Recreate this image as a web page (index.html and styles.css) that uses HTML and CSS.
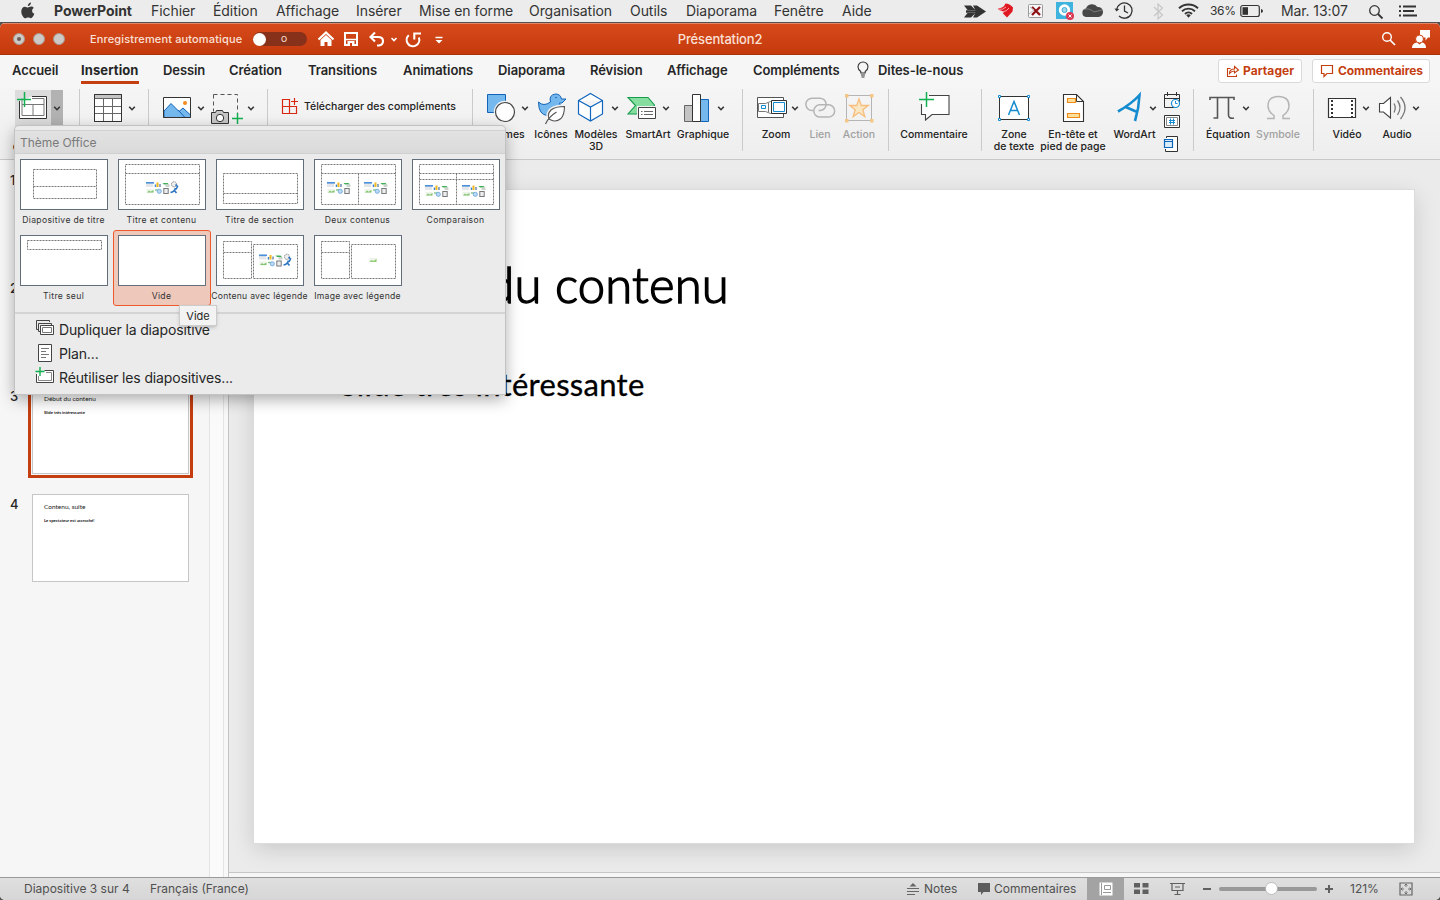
FILE: index.html
```html
<!DOCTYPE html>
<html lang="fr">
<head>
<meta charset="utf-8">
<title>Présentation2</title>
<link rel="stylesheet" href="styles.css">
</head>
<body>
<svg class="defs" width="0" height="0">
  <defs>
    <symbol id="mini6" viewBox="0 0 24 12" overflow="visible">
      <rect x="0" y="0" width="7" height="5" fill="#e4e6ea"/><rect x="0" y="0" width="8" height="1.6" fill="#4a90dc"/>
      <path d="M9.5 5V2.500" stroke="#3d84d6" stroke-width="1.500"/><path d="M11.500 5V0.500" stroke="#f3b81f" stroke-width="2"/><path d="M14 5V2" stroke="#6c8db5" stroke-width="1.500"/>
      <path d="M16.500 1h5l1.500 1.500h-5z" fill="#3faf55"/><rect x="19.500" y="2.500" width="4" height="2.500" fill="#cfd3cf"/>
      <rect x="0.500" y="7" width="7" height="4" fill="#edf3e8"/><path d="M1 10.500l2-2 1.500 1.200 3-1.700v2.500z" fill="#7fc66d"/>
      <path d="M9 8h4" stroke="#77bf82" stroke-width="1.300"/><circle cx="13.300" cy="9.300" r="2.100" fill="#b9d8f3" stroke="#68a4dc" stroke-width=".8"/>
      <rect x="17.800" y="6.500" width="4.400" height="5" fill="#eee" stroke="#77797d" stroke-width="1"/>
    </symbol>
    <symbol id="mini8" viewBox="0 0 32 12" overflow="visible">
      <use href="#mini6" width="24" height="12"/>
      <circle cx="28" cy="2.300" r="2.600" fill="#eee" stroke="#777" stroke-width=".8" stroke-dasharray="1.500 .6"/><path d="M24.500 10.500q4-.5 5-4.500M29.500 2.500l2 2-1.500 3M28 8l2.500 3" fill="none" stroke="#2e75c4" stroke-width="1.600"/>
    </symbol>
    <symbol id="caret" viewBox="0 0 6 4" overflow="visible"><path d="M.2.3L3 3.200 5.800.3" fill="none" stroke="#333" stroke-width="1.600"/></symbol>
  </defs>
</svg>

<header class="menubar">
  <svg class="apple" width="16" height="18" viewBox="0 0 16 18"><path fill="#3a3a3a" d="M11 .5c.1 1.800-1.500 3.600-3.200 3.500C7.600 2.300 9.300.6 11 .5zM13.700 6c-1 .6-1.600 1.500-1.600 2.800 0 1.500.9 2.500 2.200 3-.5 1.700-1.900 4.400-3.500 4.400-1 0-1.400-.6-2.600-.6s-1.700.6-2.600.6C3.500 16.200 1.300 12.600 1.300 9.400 1.300 6.500 3 4.700 5 4.700c1.200 0 2.200.8 2.900.8.700 0 1.900-.9 3.300-.9 1 0 2 .5 2.500 1.400z"/></svg>
  <nav class="menus"><b>PowerPoint</b><span>Fichier</span><span>Édition</span><span>Affichage</span><span>Insérer</span><span>Mise en forme</span><span>Organisation</span><span>Outils</span><span>Diaporama</span><span>Fenêtre</span><span>Aide</span></nav>
  <svg class="tray" width="246" height="22" viewBox="960 0 246 22">
    <path fill="#333" d="M964 5.500h7l4.500 4.500h-8zM964 17.500h7l4.500-4.500h-8zM973 5.500h4l9 6-9 6h-4l2.500-4.700H966v-2.600h9.500z"/>
    <path fill="#e01822" d="M998 8q5 1 7.500-4.500 4 0 7.500 4l-.5 4-5.500 6-4-4 1-2-5-1.500z"/><path d="M998 9q5 1.500 8-2M1002 12q5-.5 7-4" stroke="#f9a3a6" fill="none"/>
    <rect x="1028.500" y="4.500" width="14" height="13" rx="1" fill="#f7f7f7" stroke="#9a9a9a"/><path d="M1032 7l8 8M1040 7l-8 8" stroke="#8e1118" stroke-width="2.300"/><path d="M1029 14l5-4-4-3" stroke="#bbb" fill="none"/>
    <rect x="1056" y="2" width="17" height="17" fill="#3db3dd"/><circle cx="1064.500" cy="10" r="5.700" fill="#fff"/><circle cx="1064.500" cy="10" r="2.500" fill="#9bd9ee" stroke="#3daad5"/><circle cx="1070" cy="16" r="4" fill="#dc3753"/><path d="M1068.500 14.500l3 3m0-3l-3 3" stroke="#fff"/>
    <path fill="#474747" d="M1086 17a4.300 4.300 0 0 1 0-8.500 6.500 6.500 0 0 1 11.500-1.500 5 5 0 0 1 1 10z"/><path d="M1084 9.500q5-2 10 2.500l8-2" stroke="#888" fill="none" stroke-width=".8"/>
    <path d="M1116.800 9.500A7.700 7.700 0 1 1 1119 16" fill="none" stroke="#333" stroke-width="1.300"/><path d="M1114.500 8.500l2 3 2.800-2.500z" fill="#333"/><path d="M1124.500 5.500v5.500l3.500 2" stroke="#333" fill="none" stroke-width="1.300"/>
    <path d="M1154 7l8.500 8-4.500 4V4l4.500 4-8.500 8" fill="none" stroke="#c6c6c6" stroke-width="1.200"/>
    <g fill="none" stroke="#333" stroke-width="1.900"><path d="M1179 8.200a14 14 0 0 1 19 0M1182 11.200a9.500 9.500 0 0 1 13 0M1185 14a5 5 0 0 1 7 0"/></g><path d="M1186.300 15.300a3.200 3.200 0 0 1 4.400 0l-2.200 2.400z" fill="#333"/>
  </svg>
  <span class="pct">36%</span>
  <svg width="24" height="14" viewBox="0 0 24 14"><rect x=".8" y="1.500" width="18.500" height="11" rx="2" fill="none" stroke="#333" stroke-width="1.200"/><rect x="2.500" y="3.200" width="5.500" height="7.600" fill="#333"/><path d="M21 5v4q2-.5 2-2t-2-2z" fill="#333"/></svg>
  <span class="clock">Mar. 13:07</span>
  <svg class="find" width="16" height="16" viewBox="0 0 16 16" fill="none" stroke="#333"><circle cx="6.500" cy="6.500" r="4.800" stroke-width="1.300"/><path d="M10 10l4.500 4.500" stroke-width="1.800"/></svg>
  <svg class="list" width="18" height="12" viewBox="0 0 18 12"><path d="M0 1.500h2M4 1.500h13M0 6h2M4 6h11M0 10.500h2M4 10.500h14" stroke="#333" stroke-width="1.800"/></svg>
</header>

<div class="window">
  <div class="titlebar">
    <div class="lights"><i class="dot"></i><i></i><i></i></div>
    <span class="autosave">Enregistrement automatique</span>
    <span class="switch"><i></i><em>O</em></span>
    <svg class="quick" width="136" height="22" viewBox="312 28 136 22" fill="none" stroke="#fff">
      <path d="M318.500 39.500l7.500-7 7.500 7" stroke-width="2.200"/><path d="M320.500 40l5.500-5 5.500 5v6h-4v-4h-3v4h-4z" fill="#fff" stroke="none"/>
      <path d="M345 33h12v12h-12z" stroke-width="2"/><path d="M346 39.500h10" stroke-width="1.500"/><path d="M347.500 41h7v5h-7z" fill="#fff" stroke="none"/><path d="M350 43h2v3h-2z" fill="#c93f12" stroke="none"/>
      <path d="M375 32.500l-4.500 4.500 4.500 4.500M371 37h7q5 0 5 4 0 4-4 4.500h-2" stroke-width="2.100"/>
      <path d="M391.500 38l2.500 2.500 2.500-2.500" stroke-width="1.600"/>
      <path d="M408.800 35.200a6.300 6.300 0 1 0 10 2.300M414.300 39.500v-6h6.700" stroke-width="2.100"/>
      <path d="M435.500 37.500h7" stroke-width="1.300"/><path d="M435.500 40h7l-3.500 3.500z" fill="#fff" stroke="none"/>
    </svg>
    <span class="doc">Présentation2</span>
    <svg class="who" width="56" height="22" viewBox="1378 28 56 22"><circle cx="1387" cy="37" r="4.300" fill="none" stroke="#fff" stroke-width="1.400"/><path d="M1390 40l5 5" stroke="#fff" stroke-width="1.700"/><path d="M1420 30h10v7.500h-2l-2.500 3v-3h-5.500z" fill="#fff"/><circle cx="1419.500" cy="39" r="4" fill="#fff" stroke="#cb4114" stroke-width="1"/><path d="M1412 48q0-5 5-5.500l2.500 2 2.500-2q4 .5 4 5.500z" fill="#fff"/></svg>
  </div>

  <nav class="tabs">
    <span>Accueil</span><span class="on">Insertion</span><span>Dessin</span><span>Création</span><span>Transitions</span><span>Animations</span><span>Diaporama</span><span>Révision</span><span>Affichage</span><span>Compléments</span>
    <svg class="bulb" width="14" height="18" viewBox="0 0 14 18" fill="none" stroke="#333" stroke-width="1.100"><path d="M4.800 12V10.500Q2 8.500 2 6a5 5 0 0 1 10 0q0 2.500-2.800 4.500V12z"/><path d="M5 14h4M5.500 16h3"/></svg>
    <span>Dites-le-nous</span>
    <span class="pill share"><svg width="14" height="14" viewBox="0 0 14 14" fill="none" stroke="#c43e10" stroke-width="1.100"><path d="M4.500 4.500H1.500v8h9V10.500"/><path d="M3.500 9.500q0-4.500 5-4.500V2.500L12.500 6 8.500 9V7q-3 0-5 2.500z"/></svg>Partager</span>
    <span class="pill com"><svg width="14" height="14" viewBox="0 0 14 14" fill="none" stroke="#c43e10" stroke-width="1.200"><path d="M1.500 1.500h11v8H7l-3 3v-3H1.500z"/></svg>Commentaires</span>
  </nav>

  <div class="ribbon">
    <section class="g g1"><div class="btn split"><svg width="50" height="38" viewBox="15 89 50 38"><path d="M15 90h36v37H15z" fill="#dcdcdc"/><path d="M51 90h12v37H51z" fill="#b2b2b2"/><path d="M32 96.500h14.500v22h-27V101" fill="#fff" stroke="#333"/><path d="M22 104.500h22v11H22zM33 104.500v11M22 98.500v6M32 98.500h12v6" fill="none" stroke="#777"/><path d="M17 99.500h14M24.500 92v15" stroke="#12b050" stroke-width="1.500"/><use href="#caret" x="54" y="106.500" width="6" height="4"/></svg><label>Nouvelle<br>diapositive</label></div></section>
    <section class="g g2"><div class="btn"><svg width="52" height="38" viewBox="88 89 52 38"><path d="M94.500 94.500h27v27h-27z" fill="#fff" stroke="#333"/><path d="M95 95h26v3.500H95z" fill="#c4c4c4"/><path d="M94.500 98.500h27M94.500 106.500h27M94.500 113.500h27M103.500 98.500v23M112.500 98.500v23" stroke="#666"/><path d="M94.500 94.500h27v27h-27z" fill="none" stroke="#333"/><use href="#caret" x="129" y="106.500" width="6" height="4"/></svg><label>Tableau</label></div></section>
    <section class="g g3">
      <div class="btn"><svg width="48" height="38" viewBox="160 89 48 38"><path d="M163.500 97.500h27v20h-27z" fill="#fff"/><path d="M164 111l7-7.500 8 8 4-3.500 7.500 7v2.500H164z" fill="#75b8ee" stroke="#1264b8"/><path d="M178 110l7 7.500" stroke="#1264b8"/><circle cx="185" cy="103" r="2" fill="#f58a1f"/><path d="M163.500 97.500h27v20h-27z" fill="none" stroke="#333"/><use href="#caret" x="198" y="106.500" width="6" height="4"/></svg><label>Images</label></div>
      <div class="btn"><svg width="48" height="38" viewBox="208 89 48 38"><path d="M213.500 94.500h24v23" fill="none" stroke="#555" stroke-dasharray="4 3"/><path d="M213.500 94.500v17" stroke="#555" stroke-dasharray="4 3"/><path d="M211.500 112.500h4l1-2h6l1 2h5v11h-17z" fill="#c6c6c6" stroke="#333"/><circle cx="220" cy="118" r="3.700" fill="#fff" stroke="#333"/><path d="M232 118.500h11M237.500 113v11" stroke="#12b050" stroke-width="1.500"/><use href="#caret" x="248" y="106.500" width="6" height="4"/></svg><label>Capture</label></div>
    </section>
    <section class="g g4"><svg width="18" height="18" viewBox="281 97 18 18" fill="none" stroke="#d8280f" stroke-width="1.200"><path d="M282.500 99.500h7v7h-7zM282.500 106.500h7v7h-7zM289.500 106.500h7v7h-7zM291 101.500h7M294.500 98v7"/></svg><span>Télécharger des compléments</span></section>
    <section class="g g5">
      <div class="btn w56"><svg width="56" height="38" viewBox="478 89 56 38"><path d="M487.500 94.500h18v18h-18z" fill="#75b8ee" stroke="#1264b8"/><circle cx="505" cy="112" r="11.200" fill="#f2f2f2"/><circle cx="505" cy="112" r="9.500" fill="#fff" stroke="#444" stroke-width="1.200"/><use href="#caret" x="522" y="106.500" width="6" height="4"/></svg><label>Formes</label></div>
      <div class="btn w34"><svg width="34" height="38" viewBox="534 89 34 38"><path d="M538.500 102q5 5 12 0-2-7 5-8 5 0 6 5h4.500l-4 4h-2.500q3 6-2 10-4 3-10 2.500-9-.5-9-13.500z" fill="#75b8ee" stroke="#1264b8"/><path d="M549 119q-2-5 2-9 4-3.500 13.500-3.500 0 8-3.500 12-5 4-10 1.500z" fill="#fff" stroke="#f2f2f2" stroke-width="4"/><path d="M549 119q-2-5 2-9 4-3.500 13.500-3.500 0 8-3.500 12-5 4-10 1.500z" fill="#fff" stroke="#555" stroke-width="1.100"/><path d="M545.500 124q3-7 11-12" fill="none" stroke="#555" stroke-width="1.200"/><circle cx="556" cy="97.500" r=".8" fill="#1264b8"/></svg><label>Icônes</label></div>
      <div class="btn w56"><svg width="56" height="38" viewBox="568 89 56 38"><path d="M590.500 93.500l12 7v13.500l-12 7-12-7v-13.500zM578.500 100.500l12 6.500 12-6.500M590.500 107v14" fill="#fff" stroke="#1166bd" stroke-width="1.200"/><use href="#caret" x="612" y="106.500" width="6" height="4"/></svg><label>Modèles<br>3D</label></div>
      <div class="btn w48"><svg width="48" height="38" viewBox="624 89 48 38"><path d="M628 97.500h20l6.500 7.500-5 9h-21.500l7.500-8.500z" fill="#85dda0" stroke="#159c4b" stroke-width="1.100"/><path d="M637 106h20v14h-20z" fill="#f2f2f2"/><path d="M638.500 107.500h17v11h-17z" fill="#fff" stroke="#444"/><path d="M641 111.500h1.500M644 111.500h9M641 114.500h1.500M644 114.500h9" stroke="#666"/><use href="#caret" x="663" y="106.500" width="6" height="4"/></svg><label>SmartArt</label></div>
      <div class="btn w62"><svg width="62" height="38" viewBox="672 89 62 38"><path d="M684.500 105.500h8v16h-8z" fill="#c4c4c4" stroke="#666"/><path d="M700.500 99.500h8v22h-8z" fill="#75b8ee" stroke="#1264b8"/><path d="M692.500 94.500h8v27h-8z" fill="#fff" stroke="#333"/><use href="#caret" x="718" y="106.500" width="6" height="4"/></svg><label>Graphique</label></div>
    </section>
    <section class="g g6">
      <div class="btn w46"><svg width="46" height="38" viewBox="753 89 46 38"><path d="M757.500 97.500h26v20h-26z" fill="#fff" stroke="#555"/><path d="M758.500 103.500h7l5-2h2v12h-2l-5-2h-7z" fill="#fff" stroke="#777"/><path d="M761.500 105.500h4v3h-4z" fill="none" stroke="#158bd0"/><path d="M768.500 103v9" stroke="#777"/><path d="M771.500 100.500h15v13h-15z" fill="#fff" stroke="#333"/><path d="M773.500 102.500h11v9h-11z" fill="none" stroke="#158bd0"/><use href="#caret" x="792" y="106.500" width="6" height="4"/></svg><label>Zoom</label></div>
      <div class="btn w42 off"><svg width="42" height="38" viewBox="799 89 42 38"><g fill="none" stroke="#b5b5b5" stroke-width="1.500"><path d="M813 110.500h-1a6 6 0 0 1 0-12.300h7.500a6 6 0 0 1 1 12.300h-2"/><path d="M821.500 104.800h7a6 6 0 0 1 0 12.300h-8a6 6 0 0 1-1-12.300h3"/></g></svg><label>Lien</label></div>
      <div class="btn w36 off"><svg width="36" height="38" viewBox="841 89 36 38"><path d="M846.500 95.500h25v25h-25z" fill="none" stroke="#b5b5b5"/><path d="M845 94h3.500v3.500H845zM870 94h3.500v3.500H870zM845 119h3.500v3.500H845zM870 119h3.500v3.500H870z" fill="#f6c888"/><path d="M859 99l2.300 6.500h7l-5.500 4.200 2 7-5.800-4.200-5.800 4.200 2-7-5.500-4.200h7z" fill="#f9e7c3" stroke="#f6bd7d" stroke-width="1.300"/></svg><label>Action</label></div>
    </section>
    <section class="g g7"><div class="btn w60"><svg width="60" height="38" viewBox="904 89 60 38"><path d="M929 95.500h20v19h-17l-6.500 5.500v-5.500h-4V104" fill="#fff" stroke="#444" stroke-width="1.100"/><path d="M919 99.500h15M926.500 92v15" stroke="#12b050" stroke-width="1.500"/></svg><label>Commentaire</label></div></section>
    <section class="g g8">
      <div class="btn w48"><svg width="48" height="38" viewBox="990 89 48 38"><path d="M999.500 96.500h29v23h-29z" fill="#fff" stroke="#333"/><g fill="#fff" stroke="#158bd0"><path d="M998.500 95.500h2v2h-2zM1027.500 95.500h2v2h-2zM998.500 118.500h2v2h-2zM1027.500 118.500h2v2h-2z"/></g><path d="M1008.500 115l5.500-13.500 5.500 13.500M1010 110.500h8" fill="none" stroke="#158bd0" stroke-width="1.500"/></svg><label>Zone<br>de texte</label></div>
      <div class="btn w70"><svg width="70" height="38" viewBox="1038 89 70 38"><path d="M1063.500 94.500h13l7 7v20h-20z" fill="#fff" stroke="#333" stroke-width="1.100"/><path d="M1076.500 94.500v7h7" fill="none" stroke="#333"/><path d="M1067.500 98.500h8v4h-8zM1067.500 113.500h12v4h-12z" fill="#fde09a" stroke="#ee8a1a" stroke-width="1.200"/></svg><label>En-tête et<br>pied de page</label></div>
      <div class="btn w53"><svg width="53" height="38" viewBox="1108 89 53 38"><path d="M1118 111.500q14-8 21.500-16.500-.5 13-4.500 26M1124.500 106.500l11.500 5" fill="none" stroke="#158bd0" stroke-width="2.600"/><use href="#caret" x="1150" y="106.500" width="6" height="4"/></svg><label>WordArt</label></div>
      <svg class="stack" width="22" height="62" viewBox="1161 91 22 62"><path d="M1174 107.500h-9.500v-13h15v8M1164.500 98.500h15M1167.500 92v4M1176.500 92v4" fill="none" stroke="#333"/><circle cx="1175.500" cy="103.500" r="4" fill="#fff" stroke="#158bd0" stroke-width="1.200"/><path d="M1175.500 101v2.500h2" fill="none" stroke="#158bd0"/><path d="M1164.500 115.500h15v12h-15z" fill="#fff" stroke="#333"/><path d="M1166.500 117.500h11v8h-11z" fill="none" stroke="#888"/><path d="M1170.500 118.500v6M1173.500 118.500v6M1169 120.500h6M1169 122.500h6" stroke="#158bd0"/><path d="M1166.500 138v-1.500h11v15h-12V149" fill="#fff" stroke="#333"/><path d="M1164.500 139.500h8v8h-8zM1164.500 141.500h8" fill="#d8ecfa" stroke="#1264b8" stroke-width="1.200"/></svg>
    </section>
    <section class="g g9">
      <div class="btn w48"><svg width="48" height="38" viewBox="1204 89 48 38"><path d="M1210 100v-2.500h24V100M1217.500 97.500v20.500h-4M1228.500 97.500v17.500q0 4 5.500 3" fill="none" stroke="#555" stroke-width="1.600"/><use href="#caret" x="1243" y="106.500" width="6" height="4"/></svg><label>Équation</label></div>
      <div class="btn w52 off"><svg width="52" height="38" viewBox="1252 89 52 38"><path d="M1267 118.500h7v-3q-6-4-6-9.500 0-9.500 10.500-9.500t10.500 9.500q0 5.500-6 9.500v3h7" fill="none" stroke="#b5b5b5" stroke-width="1.500"/></svg><label>Symbole</label></div>
    </section>
    <section class="g g10">
      <div class="btn w46"><svg width="46" height="38" viewBox="1324 89 46 38"><path d="M1328.500 98.500h27v19h-27z" fill="#fff" stroke="#333" stroke-width="1.200"/><path d="M1332 100v17M1352 100v17" stroke="#333" stroke-width="2" stroke-dasharray="2 2"/><use href="#caret" x="1363" y="106.500" width="6" height="4"/></svg><label>Vidéo</label></div>
      <div class="btn w54"><svg width="54" height="38" viewBox="1370 89 54 38"><path d="M1379.500 103.500h4l7-6v20.500l-7-6h-4z" fill="#fff" stroke="#444" stroke-width="1.100"/><path d="M1394 103.500q2.500 4.500 0 9M1397.500 100.500q5 7 0 14.500M1400.500 97q9 10.500 0 22" fill="none" stroke="#777" stroke-width="1.300"/><use href="#caret" x="1413" y="106.500" width="6" height="4"/></svg><label>Audio</label></div>
    </section>
  </div>

  <main class="body">
    <aside class="slides">
      <div class="row"><b>1</b><div class="mini"></div></div>
      <div class="row"><b>2</b><div class="mini"></div></div>
      <div class="row sel"><b>3</b><div class="mini"><p>Début du contenu</p><small>Slide très intéressante</small></div></div>
      <div class="row"><b>4</b><div class="mini"><p>Contenu, suite</p><small>Le spectateur est accroché!</small></div></div>
    </aside>
    <div class="scroll"></div>
    <div class="stage">
      <div class="canvas"><article class="slide"><h1>Début du contenu</h1><p>Slide très intéressante</p></article></div>
      <div class="notes"></div>
    </div>
  </main>

  <footer class="status">
    <span class="count">Diapositive 3 sur 4</span><span class="lang">Français (France)</span>
    <svg class="ni" width="14" height="14" viewBox="0 0 14 14"><path d="M1 6.500h12M1 9.500h12M1 12.500h8" stroke="#666"/><path d="M3.500 4.500h7L7 1z" fill="#666"/></svg><span class="nt">Notes</span>
    <svg class="ci" width="14" height="14" viewBox="0 0 14 14"><path d="M1 1h12v9H6.500L4 13v-3H1z" fill="#5c5c5c"/></svg><span class="ct">Commentaires</span>
    <span class="view"><svg width="14" height="14" viewBox="0 0 14 14"><path d="M.5.500h13v13H.5z" fill="#fff"/><path d="M5.500 3.500h6v4h-6zM4 10.500h8M2.500 1v12" fill="none" stroke="#999"/></svg></span>
    <svg class="tools" width="211" height="22" viewBox="1124 878 211 22">
      <path d="M1134 883h6v4.500h-6zM1142.500 883h6v4.500h-6zM1134 889.500h6v4.500h-6zM1142.500 889.500h6v4.500h-6z" fill="#606060"/>
      <path d="M1170 883.500h15M1172 884v6.500h11V884M1175 887h5M1177.500 890.500v4M1174.500 894.500h6" fill="none" stroke="#606060" stroke-width="1.200"/>
      <path d="M1203 889h8M1325 889h8M1329 885v8" stroke="#606060" stroke-width="2"/>
      <path d="M1221 889h94" stroke="#999" stroke-width="4" stroke-linecap="round"/><circle cx="1271.500" cy="888.500" r="6" fill="#fff" stroke="#aaa" stroke-width=".7"/>
    </svg>
    <span class="zoom">121%</span>
    <svg width="14" height="14" viewBox="0 0 14 14" fill="none" stroke="#666"><path d="M1 1h12v12H1z" stroke-width="1.200"/><path d="M7 2v3M7 9v3M2 7h3M9 7h3M5.500 3.500L7 2l1.500 1.500M5.500 10.500L7 12l1.500-1.500M3.500 5.500L2 7l1.500 1.500M10.500 5.500L12 7l-1.500 1.500" stroke-width=".9"/></svg>
  </footer>
</div>

<div class="popup">
  <div class="head">Thème Office</div>
  <div class="layouts">
    <figure><svg width="88" height="51" viewBox="0 0 88 51"><path class="d" d="M13.500 10.500h63v29h-63zM13.500 27.500h63"/></svg><figcaption>Diapositive de titre</figcaption></figure>
    <figure><svg width="88" height="51" viewBox="0 0 88 51"><path class="d" d="M7.500 5.500h74v40h-74zM7.500 14.500h74"/><use href="#mini8" x="28" y="23" width="32" height="12"/></svg><figcaption>Titre et contenu</figcaption></figure>
    <figure><svg width="88" height="51" viewBox="0 0 88 51"><path class="d" d="M7.500 14.500h74v30h-74zM7.500 34.500h74"/></svg><figcaption>Titre de section</figcaption></figure>
    <figure><svg width="88" height="51" viewBox="0 0 88 51"><path class="d" d="M7.500 5.500h74v40h-74zM7.500 14.500h74M44.500 14.500v31"/><use href="#mini6" x="13" y="23" width="24" height="12"/><use href="#mini6" x="50" y="23" width="24" height="12"/></svg><figcaption>Deux contenus</figcaption></figure>
    <figure><svg width="88" height="51" viewBox="0 0 88 51"><path class="d" d="M7.500 5.500h74v40h-74zM7.500 14.500h74M7.500 20.500h74M44.500 14.500v31"/><use href="#mini6" x="13" y="26" width="24" height="12"/><use href="#mini6" x="50" y="26" width="24" height="12"/></svg><figcaption>Comparaison</figcaption></figure>
    <figure><svg width="88" height="51" viewBox="0 0 88 51"><path class="d" d="M7.500 5.500h74v9h-74z"/></svg><figcaption>Titre seul</figcaption></figure>
    <figure class="picked"><svg width="88" height="51" viewBox="0 0 88 51"></svg><figcaption>Vide</figcaption></figure>
    <figure><svg width="88" height="51" viewBox="0 0 88 51"><path class="d" d="M7.500 6.500h28v37h-28zM7.500 17.500h28M37.500 9.500h44v34h-44z"/><use href="#mini8" x="43" y="19.500" width="32" height="12"/></svg><figcaption class="tight">Contenu avec légende</figcaption></figure>
    <figure><svg width="88" height="51" viewBox="0 0 88 51"><path class="d" d="M7.500 6.500h28v37h-28zM7.500 17.500h28M37.500 9.500h44v34h-44z"/><path d="M55 23h8v4h-8z" fill="#eef3ea"/><path d="M55.500 27l2-2 2 1 3-2v3z" fill="#8fcf72"/></svg><figcaption class="tight">Image avec légende</figcaption></figure>
  </div>
  <ul class="actions">
    <li><svg width="20" height="18" viewBox="0 0 20 18" fill="none" stroke="#444"><path d="M3 9.500H1.500v-9h13V2M5 11.500H3.500v-8h13V5"/><path d="M5.500 5.500h13v9h-13z" fill="#fff"/><path d="M7.500 7.500h9v5h-9z" stroke="#777"/></svg>Dupliquer la diapositive</li>
    <li><svg width="20" height="18" viewBox="0 0 20 18" fill="none" stroke="#444"><path d="M3.500.5h13v17h-13z" fill="#fff"/><path d="M6 4.500h8M6 7.500h5M6 10.500h8M6 13.500h5" stroke="#777"/></svg>Plan...</li>
    <li><svg width="20" height="18" viewBox="0 0 20 18" fill="none" stroke="#444"><path d="M9.500 2.500h9v12h-17V6" fill="#fff"/><path d="M11 4.500h5.500v8h-13V8" stroke="#888"/><path d="M.5 3.500h9M5-1v9" stroke="#12b050" stroke-width="1.400"/></svg>Réutiliser les diapositives...</li>
  </ul>
  <div class="tip">Vide</div>
</div>
</body>
</html>
```
FILE: styles.css
```css
* { box-sizing: border-box; }
body { margin: 0; width: 1440px; height: 900px; overflow: hidden; background: #55504e; font-family: Inter, "Liberation Sans", sans-serif; color: #262626; position: relative; white-space: nowrap; }
svg { display: block; flex: none; overflow: visible; }
.defs { position: absolute; }
label { display: block; }

.menubar { height: 22px; display: flex; align-items: center; background: #ececec; font-size: 14px; color: #333; padding-left: 20px; }
.apple { margin-top: -1px; width: 16px; }
.menus { display: grid; grid-template-columns: 97px 62px 63px 80px 63px 110px 101px 56px 88px 68px 54px; margin: -2px 0 0 18px; width: 906px; letter-spacing: -.06px; }
.pct { font-size: 12px; width: 30px; margin: -2px 0 0 4px; letter-spacing: -.3px; }
.clock { margin: -2px 0 0 17px; width: 87px; letter-spacing: -.1px; }
.find { margin-top: 1px; }
.list { margin-left: 15px; }

.window { margin-top: 1px; height: 877px; display: flex; flex-direction: column; border-radius: 5px; overflow: hidden; background: #f2f2f2; }
.titlebar { height: 32px; flex: none; display: flex; align-items: center; background: linear-gradient(#d64a1c, #c53a0c); border-top: 1px solid #e0876a; border-bottom: 1px solid #a9330c; color: #fbe0d6; padding-left: 13px; }
.lights { display: flex; gap: 8px; }
.lights i { width: 12px; height: 12px; border-radius: 50%; background: #cdc9c7; border: 1px solid #a8988f; display: flex; align-items: center; justify-content: center; }
.lights .dot::after { content: ""; width: 4px; height: 4px; border-radius: 50%; background: #6b5b54; }
.autosave { margin-left: 25px; width: 163px; font-size: 11px; font-weight: 500; letter-spacing: .14px; }
.switch { width: 54px; height: 14px; border-radius: 7px; background: #87301a; display: flex; align-items: center; }
.switch i { width: 13px; height: 13px; border-radius: 50%; background: #fff; }
.switch em { font: 500 8px Inter, sans-serif; margin-left: 15px; }
.quick { margin-left: 5px; }
.doc { width: 170px; margin-left: 187px; text-align: center; font-size: 13px; font-weight: 500; letter-spacing: -.15px; }
.who { margin-left: 573px; }

.tabs { height: 32px; flex: none; display: grid; align-items: center; grid-template-columns: 69px 82px 66px 79px 95px 95px 92px 77px 86px 103px 22px 340px 94px 118px; padding-left: 12px; font-size: 13px; font-weight: 600; letter-spacing: -.08px; background: #f6f6f6; }
.tabs > span:not(.pill) { margin-top: -2px; }
.bulb { margin-top: -2px; }
.tabs .on { justify-self: start; font-weight: 700; border-bottom: 3px solid #c43e10; line-height: 22px; padding-top: 2px; height: 27px; letter-spacing: .1px; margin-top: -1px !important; }
.pill { width: 84px; height: 24px; margin-top: -1px; border: 1px solid #d9d9d9; border-radius: 3px; background: #fff; display: flex; align-items: center; gap: 2px; padding-left: 7px; color: #c43e10; font-size: 12px; font-weight: 700; }
.share { letter-spacing: .05px; gap: 3px; }
.com { width: 118px; gap: 4px; }

.ribbon { height: 73px; flex: none; display: flex; background: linear-gradient(#f5f5f5, #eee); border-bottom: 1px solid #c8c8c8; padding-top: 2px; }
.g { height: 62px; flex: none; display: flex; border-right: 1px solid #cbcbcb; font-size: 10.5px; font-weight: 500; color: #222; }
.btn { display: flex; flex-direction: column; align-items: center; line-height: 12px; text-align: center; letter-spacing: 0; }
.btn label { margin-top: 2px; }
.off { color: #a0a0a0; }
.g1 { width: 80px; padding-left: 15px; } .g1 .btn { width: 50px; }
.g2 { width: 69px; padding-left: 8px; } .g2 .btn { width: 52px; }
.g3 { width: 119px; padding-left: 11px; } .g3 .btn { width: 48px; }
.g4 { width: 205px; padding: 8px 0 0 13px; align-items: flex-start; line-height: 19px; letter-spacing: 0; gap: 5px; }
.g5 { width: 270px; padding-left: 5px; }
.g6 { width: 146px; padding-left: 10px; }
.g7 { width: 93px; padding-left: 15px; }
.g8 { width: 212px; padding-left: 8px; }
.g9 { width: 120px; padding-left: 10px; }
.g10 { width: 126px; padding-left: 10px; border: 0; }
.w34 { width: 34px; } .w36 { width: 36px; } .w42 { width: 42px; } .w46 { width: 46px; } .w48 { width: 48px; } .w52 { width: 52px; } .w53 { width: 53px; } .w54 { width: 54px; } .w56 { width: 56px; } .w60 { width: 60px; } .w62 { width: 62px; } .w70 { width: 70px; }
.stack { margin-top: 2px; }

.body { flex: 1; display: flex; min-height: 0; }
.slides { width: 210px; flex: none; background: #f6f6f6; border-right: 1px solid #e4e4e4; padding-top: 10px; display: flex; flex-direction: column; gap: 20px; }
.row { display: flex; height: 88px; padding-left: 10px; }
.row b { width: 22px; font-size: 13px; font-weight: 500; line-height: 20px; }
.mini { width: 157px; height: 88px; background: #fff; border: 1px solid #c6c6c6; padding: 5px 0 0 11px; font-family: Lato, sans-serif; color: #222; }
.mini p { margin: 0; font-size: 6.500px; line-height: 13px; }
.mini small { display: block; margin-top: 1px; font-size: 4.300px; line-height: 13px; font-weight: 700; letter-spacing: -.05px; }
.sel .mini { outline: 3px solid #c43e10; outline-offset: 1px; }
.scroll { width: 19px; flex: none; background: linear-gradient(90deg, #fafafa 13px, #e4e4e4 13px 14px, #f8f8f8 14px); border-right: 1px solid #c3c3c3; }
.stage { flex: 1; display: flex; flex-direction: column; }
.canvas { flex: 1; background: #ebebeb; padding: 30px 0 0 25px; }
.slide { width: 1160px; height: 653px; background: #fff; box-shadow: 0 0 0 1px #dcdcdc, 0 6px 22px rgba(0,0,0,.15); padding: 60px 0 0 86px; font-family: Lato, sans-serif; color: #000; }
.slide h1 { margin: 0; font-size: 49px; font-weight: 300; line-height: 68px; letter-spacing: .15px; -webkit-text-stroke: 1.4px #000; }
.slide p { margin: 46px 0 0; font-size: 31px; line-height: 40px; -webkit-text-stroke: .3px #000; letter-spacing: .28px; }
.notes { height: 5px; background: #f6f6f6; border-top: 1px solid #c6c6c6; }

.status { height: 23px; flex: none; display: flex; align-items: center; background: linear-gradient(#dfdfdf, #d6d6d6); border-top: 1px solid #9a9a9a; font-size: 12px; color: #505050; padding-left: 24px; }
.status > span:not(.view) { margin-top: -2px; }
.status svg { margin-top: -1px; }
.count { width: 126px; } .lang { width: 756px; letter-spacing: 0; }
.nt { width: 52px; margin-left: 4px; }
.ci { margin-left: 1px; } .ct { width: 93px; margin-left: 3px; }
.view { width: 37px; height: 22px; background: #a3a3a3; display: flex; align-items: center; justify-content: center; }
.zoom { width: 49px; margin-left: 15px; }

.popup { position: absolute; left: 15px; top: 126px; width: 490px; height: 268px; background: #ebebeb; border-radius: 4px 4px 0 0; box-shadow: 0 0 0 1px #c2c2c2, 0 5px 16px rgba(0,0,0,.35); padding-top: 4px; }
.head { height: 24px; border: 1px solid #d0d0d0; border-width: 1px 0; background: linear-gradient(#e2e2e2, #dadada); color: #7a7a7a; font-size: 12px; line-height: 23px; padding-left: 5px; letter-spacing: -.05px; }
.layouts { display: grid; grid-template-columns: repeat(5, 98px); grid-auto-rows: 76px; height: 160px; border-bottom: 2px solid #d4d4d4; }
figure { margin: 0; width: 98px; height: 76px; padding-top: 5px; display: flex; flex-direction: column; align-items: center; border: 1px solid transparent; border-width: 0 1px; }
figure svg { background: #fff; outline: 1px solid #626e7c; outline-offset: -1px; }
figcaption { font-size: 8.600px; line-height: 12px; margin: 4px 1px 0 0; letter-spacing: .35px; color: #333; }
.tight { letter-spacing: .27px; }
.d { fill: none; stroke: #777; stroke-dasharray: 2 1; }
.picked { border: 1px solid #ee592c; border-radius: 3px; background: #efc8bc; padding-top: 4px; }
.actions { list-style: none; margin: 3px 0 0; padding: 0 0 0 20px; font-size: 14px; letter-spacing: -.15px; }
.actions li { height: 24px; display: flex; align-items: center; gap: 4px; }
.tip { position: absolute; left: 165px; top: 180px; width: 36px; height: 19px; background: #f3f3f3; box-shadow: 0 0 0 1px #ccc, 0 2px 4px rgba(0,0,0,.25); font-size: 11px; line-height: 20px; text-align: center; }
```
